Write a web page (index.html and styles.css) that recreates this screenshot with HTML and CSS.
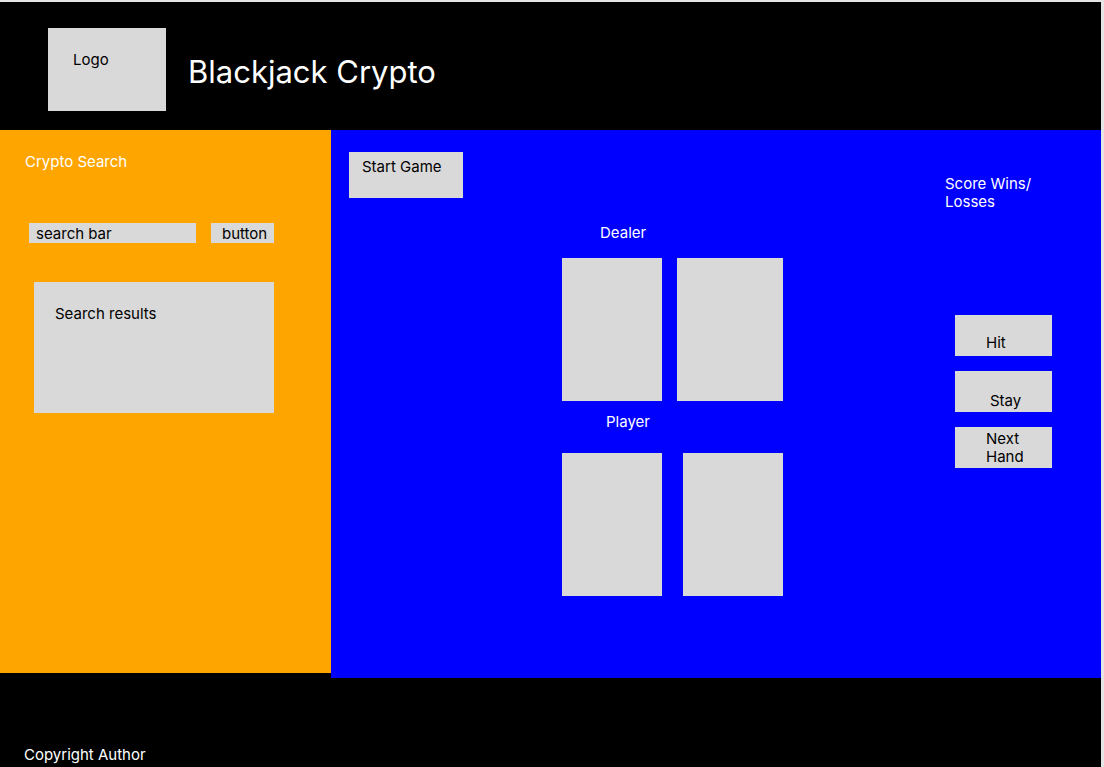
FILE: index.html
```html
<!DOCTYPE html>
<html lang="en">
<head>
<meta charset="utf-8">
<meta name="viewport" content="width=device-width, initial-scale=1">
<title>Blackjack Crypto</title>
<link rel="stylesheet" href="styles.css">
</head>
<body>
<div class="page">
  <header class="header">
    <div class="logo">Logo</div>
    <h1 class="title">Blackjack Crypto</h1>
  </header>
  <main class="main">
    <aside class="sidebar">
      <h2 class="heading"><label for="search">Crypto Search</label></h2>
      <form class="search-form">
        <input class="search-input" id="search" type="text" placeholder="search bar">
        <button class="search-button" type="button">button</button>
      </form>
      <section class="results">Search results</section>
    </aside>
    <section class="game">
      <button class="start" type="button">Start Game</button>
      <div class="table">
        <h2 class="heading dealer-name">Dealer</h2>
        <div class="hand">
          <div class="card"></div>
          <div class="card card-wide"></div>
        </div>
        <h2 class="heading player-name">Player</h2>
        <div class="hand">
          <div class="card"></div>
          <div class="card"></div>
        </div>
      </div>
      <div class="side">
        <p class="score">Score Wins/<br>Losses</p>
        <div class="actions">
          <button class="action hit" type="button">Hit</button>
          <button class="action stay" type="button">Stay</button>
          <button class="action next" type="button">Next<br>Hand</button>
        </div>
      </div>
    </section>
  </main>
  <footer class="footer">Copyright Author</footer>
</div>
</body>
</html>
```
FILE: styles.css
```css
* {
  box-sizing: border-box;
}

body {
  margin: 0;
  background: #e5e5e5;
  color: #000;
  font: 15px/18px Inter, "Liberation Sans", sans-serif;
}

h1, h2, p {
  margin: 0;
  font-weight: 400;
}

button, input {
  margin: 0;
  padding: 0;
  border: 0;
  border-radius: 0;
  background: #d9d9d9;
  color: #000;
  font: inherit;
  text-align: left;
}

button {
  display: flex;
  align-items: flex-start;
  cursor: pointer;
}

.page {
  display: flex;
  flex-direction: column;
  min-height: 100vh;
  padding: 2px 3px 0 0;
}

.header {
  display: flex;
  align-items: center;
  gap: 22px;
  padding: 26px 48px 19px;
  background: #000;
  color: #fff;
}

.logo {
  width: 118px;
  min-height: 83px;
  padding: 23px 25px;
  background: #d9d9d9;
  color: #000;
}

.title {
  padding-top: 4px;
  font-size: 31px;
  line-height: 38px;
}

.heading {
  font-size: 15px;
  line-height: 18px;
}

.main {
  display: flex;
  align-items: flex-start;
  background: #000;
}

.sidebar {
  flex: 0 0 331px;
  min-width: 0;
  min-height: 543px;
  padding: 23px 57px 0 25px;
  background: #ffa500;
  color: #fff;
}

.search-form {
  display: flex;
  gap: 15px;
  margin: 52px 0 39px 4px;
}

.search-input {
  flex: 1;
  min-width: 0;
  height: 20px;
  padding: 0 7px;
}

.search-input::placeholder {
  color: #000;
  opacity: 1;
}

.search-button {
  height: 20px;
  width: 63px;
  padding: 2px 0 0 11px;
}

.results {
  min-height: 131px;
  margin-left: 9px;
  padding: 23px 21px;
  background: #d9d9d9;
  color: #000;
}

.game {
  display: flex;
  flex: 1;
  min-height: 548px;
  padding: 22px 49px 0 18px;
  background: #00f;
  color: #fff;
}

.start {
  width: 114px;
  height: 46px;
  padding: 6px 13px;
}

.table {
  width: 221px;
  margin: 72px 0 0 99px;
}

.hand {
  display: flex;
  justify-content: space-between;
}

.card {
  width: 100px;
  height: 143px;
  background: #d9d9d9;
}

.card-wide {
  width: 106px;
}

.dealer-name {
  margin-bottom: 16px;
  padding-left: 38px;
}

.player-name {
  margin: 12px 0 22px;
  padding-left: 44px;
}

.side {
  width: 107px;
  margin: 23px 0 0 auto;
}

.actions {
  display: flex;
  flex-direction: column;
  gap: 15px;
  margin: 104px 0 0 10px;
}

.action {
  width: 97px;
  height: 41px;
}

.hit {
  padding: 19px 0 0 31px;
}

.stay {
  padding: 21px 0 0 35px;
}

.next {
  padding: 3px 0 0 31px;
}

.footer {
  flex: 1;
  padding: 68px 24px 3px;
  background: #000;
  color: #fff;
}
```
